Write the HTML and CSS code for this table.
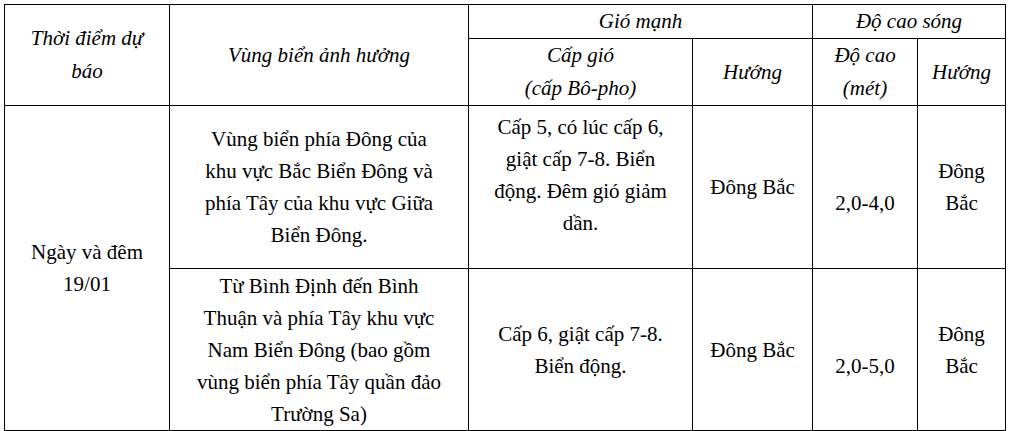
FILE: index.html
```html
<!DOCTYPE html>
<html>
<head>
<meta charset="utf-8">
<link rel="stylesheet" href="styles.css">
</head>
<body>
<table class="forecast">
  <colgroup>
    <col class="c1"><col class="c2"><col class="c3"><col class="c4"><col class="c5"><col class="c6">
  </colgroup>
  <tr class="h1">
    <th class="hd" rowspan="2">Thời điểm dự<br>báo</th>
    <th class="hd" rowspan="2">Vùng biển ảnh hưởng</th>
    <th class="hd" colspan="2">Gió mạnh</th>
    <th class="hd" colspan="2">Độ cao sóng</th>
  </tr>
  <tr class="h2">
    <th class="hd">Cấp gió<br>(cấp Bô-pho)</th>
    <th class="hd">Hướng</th>
    <th class="hd">Độ cao<br>(mét)</th>
    <th class="hd">Hướng</th>
  </tr>
  <tr class="r1">
    <td class="cell" rowspan="2">Ngày và đêm<br>19/01</td>
    <td class="cell">Vùng biển phía Đông của<br>khu vực Bắc Biển Đông và<br>phía Tây của khu vực Giữa<br>Biển Đông.</td>
    <td class="cell up">Cấp 5, có lúc cấp 6,<br>giật cấp 7-8. Biển<br>động. Đêm gió giảm<br>dần.</td>
    <td class="cell">Đông Bắc</td>
    <td class="cell down">2,0-4,0</td>
    <td class="cell">Đông<br>Bắc</td>
  </tr>
  <tr class="r2">
    <td class="cell">Từ Bình Định đến Bình<br>Thuận và phía Tây khu vực<br>Nam Biển Đông (bao gồm<br>vùng biển phía Tây quần đảo<br>Trường Sa)</td>
    <td class="cell">Cấp 6, giật cấp 7-8.<br>Biển động.</td>
    <td class="cell">Đông Bắc</td>
    <td class="cell down">2,0-5,0</td>
    <td class="cell">Đông<br>Bắc</td>
  </tr>
</table>
</body>
</html>
```

FILE: styles.css
```css
body {
  margin: 4px;
  background: #fff;
  color: #000;
  font-family: serif;
  font-size: 21px;
}
.forecast {
  border-collapse: collapse;
  table-layout: fixed;
  width: 1001px;
}
.c1 { width: 165px; }
.c2 { width: 299px; }
.c3 { width: 224px; }
.c4 { width: 120px; }
.c5 { width: 105px; }
.c6 { width: 88px; }
.cell,
.hd {
  font-family: serif;
  font-size: 21px;
  border: 1.5px solid #000;
  padding: 0 2px;
  text-align: center;
  vertical-align: middle;
  line-height: 32px;
}
.hd {
  font-weight: normal;
  font-style: italic;
  line-height: 33px;
}
.h1 { height: 33px; }
.h2 { height: 64px; }
.r1 { height: 163px; }
.r2 { height: 162px; }
.cell.up { padding-bottom: 24px; }
.cell.down { padding-top: 32px; }
```
